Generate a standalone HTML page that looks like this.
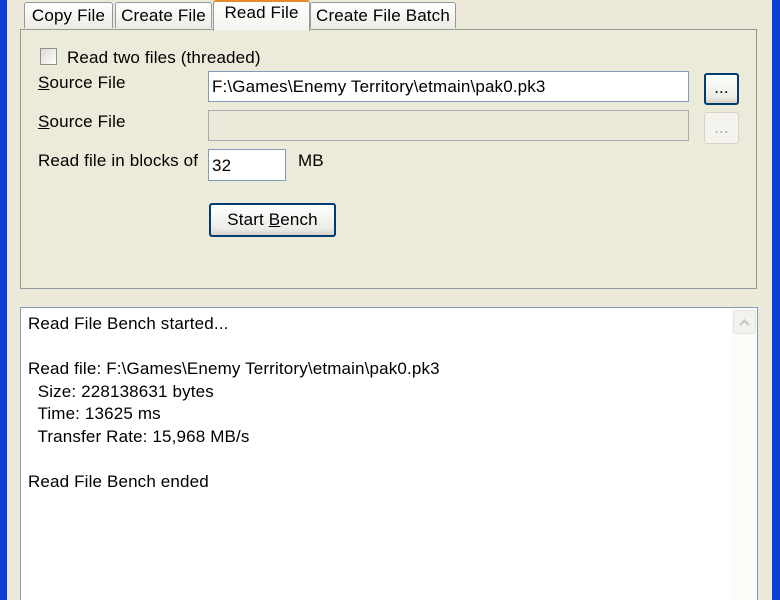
<!DOCTYPE html>
<html><head><style>
html,body{margin:0;width:780px;height:600px;overflow:hidden}
body{background:#ece9d8;font-family:"Liberation Sans",sans-serif;font-size:17px;letter-spacing:0.15px;color:#000;position:relative}
.a{position:absolute}
.tab{position:absolute;top:2px;height:26px;border:1px solid #919b9c;border-bottom:none;background:linear-gradient(#fff,#ecebe5);border-radius:3px 3px 0 0;line-height:25px;text-align:center;box-sizing:border-box}
.inp{position:absolute;background:#fff;border:1px solid #7f9db9;box-sizing:border-box;padding-left:3px;line-height:29px}
.btn{position:absolute;border:1px solid #003c74;border-radius:3px;background:linear-gradient(#fff,#ecebe6 80%,#d6d0c5);box-sizing:border-box;text-align:center}
</style></head><body>
<div class="a" style="left:0;top:0;width:7px;height:600px;background:#0a3fd8"></div>
<div class="a" style="left:772px;top:0;width:8px;height:600px;background:#0a3fd8"></div>
<div class="tab" style="left:24px;width:89px">Copy File</div>
<div class="tab" style="left:115px;width:97px">Create File</div>
<div class="tab" style="left:310px;width:146px">Create File Batch</div>
<div class="a" style="left:20px;top:29px;width:737px;height:260px;border:1px solid #919b9c;box-sizing:border-box;background:#ecead9"></div>
<div class="tab" style="left:213px;top:0;width:97px;height:31px;border-top:2px solid #e68b2c;line-height:22px;z-index:2;background:linear-gradient(#fff,#f4f3ee)">Read File</div>
<div class="a" style="left:40px;top:48px;width:17px;height:17px;border:1px solid #8f8f8f;background:linear-gradient(135deg,#dcdbd3,#fff);box-sizing:border-box"></div>
<div class="a" style="left:67px;top:48px">Read two files (threaded)</div>
<div class="a" style="left:38px;top:73px"><u>S</u>ource File</div>
<div class="inp" style="left:208px;top:71px;width:481px;height:31px">F:\Games\Enemy Territory\etmain\pak0.pk3</div>
<div class="btn" style="left:704px;top:73px;width:35px;height:32px;border-width:2px;line-height:26px">...</div>
<div class="a" style="left:38px;top:112px"><u>S</u>ource File</div>
<div class="inp" style="left:208px;top:110px;width:481px;height:31px;background:#ece9d8;border-color:#a5acb2"></div>
<div class="btn" style="left:704px;top:112px;width:35px;height:32px;border-color:#d8d5c8;color:#aca899;line-height:30px;background:#f4f3ee">...</div>
<div class="a" style="left:38px;top:151px">Read file in blocks of</div>
<div class="inp" style="left:208px;top:149px;width:78px;height:32px;line-height:32px">32</div>
<div class="a" style="left:298px;top:151px">MB</div>
<div class="btn" style="left:209px;top:203px;width:127px;height:34px;border-width:2px;line-height:30px">Start <u>B</u>ench</div>
<div class="a" style="left:20px;top:307px;width:738px;height:293px;border:1px solid #7f9db9;border-bottom:none;background:#fff;box-sizing:border-box"></div>
<div class="a" style="left:731px;top:308px;width:26px;height:292px;background:#fbfbf8"></div>
<div class="a" style="left:733px;top:310px;width:23px;height:24px;border:1px solid #e5e3dc;border-radius:3px;background:#f3f2ec;box-sizing:border-box"><svg width="21" height="22" viewBox="0 0 21 22"><path d="M6 14 L10.5 9.5 L15 14" stroke="#c8c6bd" stroke-width="2.2" fill="none"/></svg></div>
<div class="a" style="left:28px;top:313px;line-height:22.6px;white-space:pre">Read File Bench started...

Read file: F:\Games\Enemy Territory\etmain\pak0.pk3
  Size: 228138631 bytes
  Time: 13625 ms
  Transfer Rate: 15,968 MB/s

Read File Bench ended</div>
</body></html>
